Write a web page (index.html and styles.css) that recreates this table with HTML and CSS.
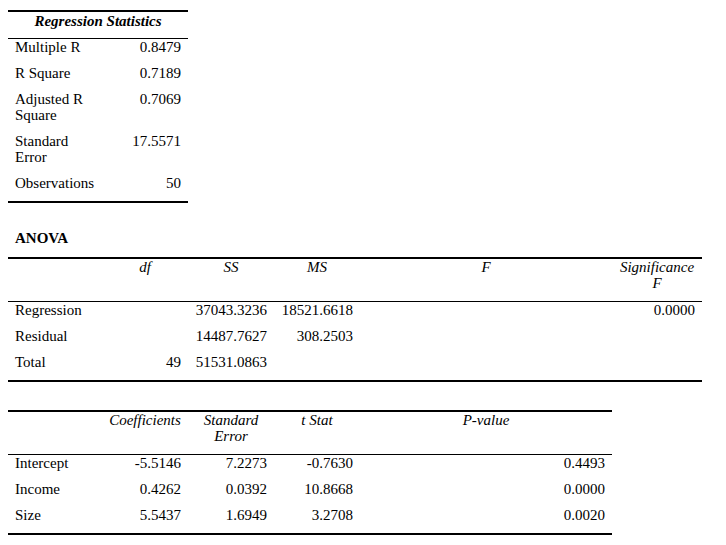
FILE: index.html
```html
<!DOCTYPE html>
<html>
<head>
<meta charset="utf-8">
<link rel="stylesheet" href="styles.css">
</head>
<body>
<div class="page">
  <table class="stats t1">
    <colgroup><col class="c-label"><col class="c-num"></colgroup>
    <thead>
      <tr><th colspan="2" class="title">Regression Statistics</th></tr>
    </thead>
    <tbody>
      <tr><td>Multiple R</td><td class="num">0.8479</td></tr>
      <tr><td>R Square</td><td class="num">0.7189</td></tr>
      <tr><td>Adjusted R Square</td><td class="num">0.7069</td></tr>
      <tr><td>Standard Error</td><td class="num">17.5571</td></tr>
      <tr><td>Observations</td><td class="num">50</td></tr>
    </tbody>
  </table>

  <div class="section-title">ANOVA</div>

  <table class="stats t2">
    <colgroup><col class="c-label"><col class="c-num"><col class="c-num"><col class="c-num"><col class="c-wide"><col class="c-sig"></colgroup>
    <thead>
      <tr><th></th><th>df</th><th>SS</th><th>MS</th><th>F</th><th>Significance F</th></tr>
    </thead>
    <tbody>
      <tr><td>Regression</td><td class="num"></td><td class="num">37043.3236</td><td class="num">18521.6618</td><td class="num"></td><td class="num">0.0000</td></tr>
      <tr><td>Residual</td><td class="num"></td><td class="num">14487.7627</td><td class="num">308.2503</td><td class="num"></td><td class="num"></td></tr>
      <tr><td>Total</td><td class="num">49</td><td class="num">51531.0863</td><td class="num"></td><td class="num"></td><td class="num"></td></tr>
    </tbody>
  </table>

  <table class="stats t3">
    <colgroup><col class="c-label"><col class="c-num"><col class="c-num"><col class="c-num"><col class="c-wide"></colgroup>
    <thead>
      <tr><th></th><th>Coefficients</th><th>Standard Error</th><th>t Stat</th><th>P-value</th></tr>
    </thead>
    <tbody>
      <tr><td>Intercept</td><td class="num">-5.5146</td><td class="num">7.2273</td><td class="num">-0.7630</td><td class="num">0.4493</td></tr>
      <tr><td>Income</td><td class="num">0.4262</td><td class="num">0.0392</td><td class="num">10.8668</td><td class="num">0.0000</td></tr>
      <tr><td>Size</td><td class="num">5.5437</td><td class="num">1.6949</td><td class="num">3.2708</td><td class="num">0.0020</td></tr>
    </tbody>
  </table>
</div>
</body>
</html>
```

FILE: styles.css
```css
html, body {
  margin: 0;
  padding: 0;
  background: #ffffff;
}

body {
  font-family: "Liberation Serif", "Times New Roman", serif;
  font-size: 15px;
  line-height: 16px;
  color: #000000;
}

.page {
  padding: 10px 8px 0 8px;
}

.stats {
  border-collapse: collapse;
  table-layout: fixed;
  border-top: 2px solid #000;
  border-bottom: 2px solid #000;
}

.t1 { width: 180px; }
.t2 { width: 694px; }
.t3 { width: 604px; margin-top: 28px; }

.c-label { width: 94px; }
.c-num { width: 86px; }
.c-wide { width: 252px; }
.c-sig { width: 90px; }

.stats th,
.stats td {
  padding: 0 7px 10px 7px;
  vertical-align: top;
  text-align: left;
}

.stats th {
  font-style: italic;
  font-weight: normal;
  text-align: center;
}

.stats thead tr {
  border-bottom: 1px solid #000;
}

.stats th.title {
  font-weight: bold;
  padding-top: 1px;
  padding-bottom: 9px;
}

.stats td.num {
  text-align: right;
}

.section-title {
  font-weight: bold;
  margin: 27px 0 11px 7px;
}
```
